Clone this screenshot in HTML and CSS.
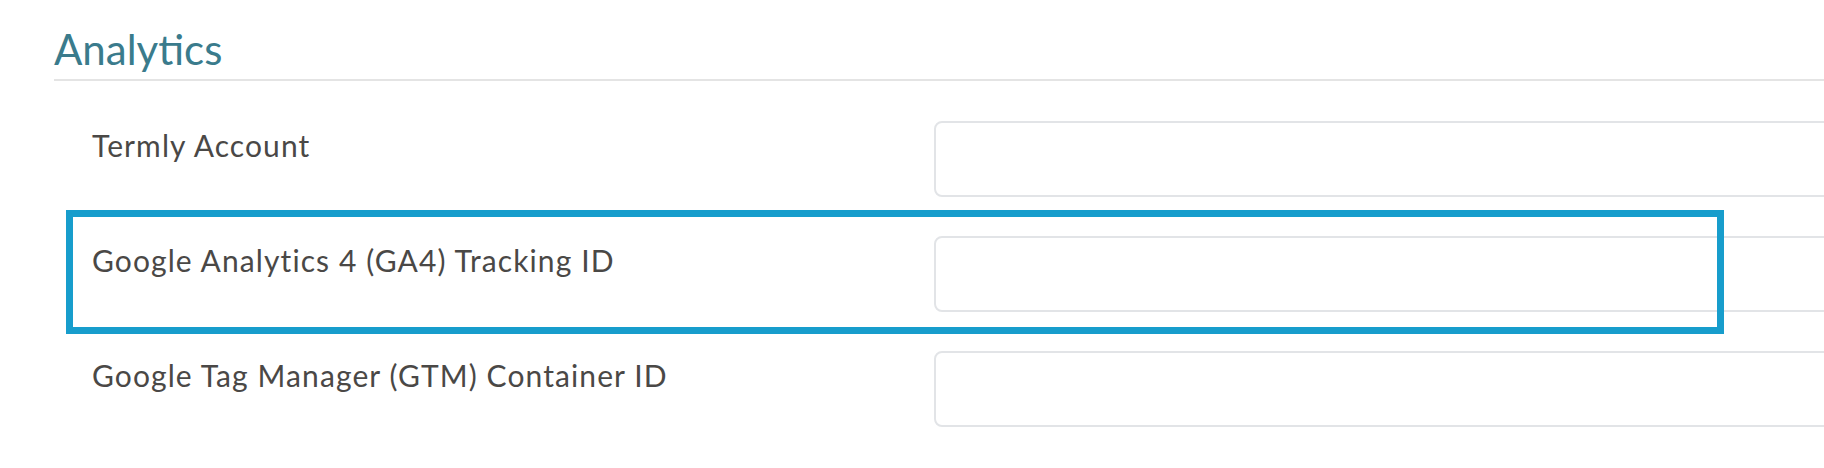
FILE: index.html
```html
<!DOCTYPE html>
<html lang="en">
<head>
    <meta charset="UTF-8">
    <meta name="viewport" content="width=device-width, initial-scale=1.0">
    <title>Analytics Settings</title>
    <link rel="stylesheet" href="styles.css">
</head>
<body>
    <section class="settings-section">
        <h2 class="section-title">Analytics</h2>
        <div class="fields">
            <div class="field-row">
                <label for="termly">Termly Account</label>
                <input type="text" id="termly">
            </div>
            <div class="field-row highlight">
                <label for="ga4">Google Analytics 4 (GA4) Tracking ID</label>
                <input type="text" id="ga4">
            </div>
            <div class="field-row">
                <label for="gtm">Google Tag Manager (GTM) Container ID</label>
                <input type="text" id="gtm">
            </div>
        </div>
    </section>
</body>
</html>
```

FILE: styles.css
```css
*,
*::before,
*::after {
    margin: 0;
    padding: 0;
    box-sizing: border-box;
    font-family: Lato, "Open Sans", sans-serif;
}

body {
    background: #fff;
    overflow: hidden;
    width: 1824px;
    height: 468px;
}

.settings-section {
    padding: 24px 0 0 54px;
}

.section-title {
    font-size: 42px;
    font-weight: 400;
    line-height: 50px;
    color: #3a7b8c;
    padding-bottom: 5px;
    border-bottom: 2px solid #e4e4e4;
}

.fields {
    display: flex;
    flex-direction: column;
    gap: 39px;
    padding: 40px 0 0 38px;
}

.field-row {
    position: relative;
    display: grid;
    grid-template-columns: 842px 1000px;
    height: 76px;
}

.field-row label {
    padding-top: 6px;
    font-size: 30px;
    line-height: 36px;
    letter-spacing: 1.1px;
    color: #4a4846;
}

.field-row input {
    height: 76px;
    border: 2px solid #e2e4e7;
    border-radius: 8px;
    background: #fff;
    outline: none;
}

/* annotation box drawn over the second row */
.highlight::after {
    content: "";
    position: absolute;
    left: -26px;
    top: -26px;
    width: 1658px;
    height: 124px;
    border: 7.5px solid #179dcc;
    pointer-events: none;
}
```
